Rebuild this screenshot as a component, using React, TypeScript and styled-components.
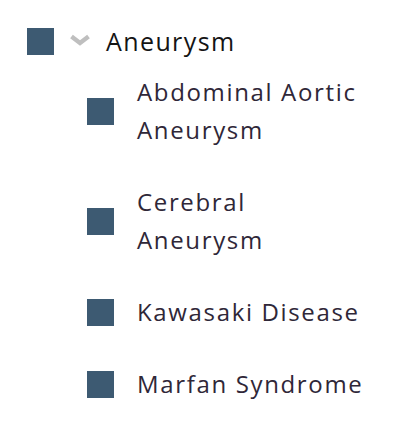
import * as React from "react";
import styled, { createGlobalStyle } from "styled-components";

const GlobalStyle = createGlobalStyle`
  html, body {
    margin: 0;
    padding: 0;
    background: #ffffff;
  }
  body {
    font-family: "Open Sans", "Liberation Sans", sans-serif;
  }
`;

const STree = styled.div`
  padding: 22px 0 0 27px;
  display: flex;
  flex-direction: column;
`;

const SRow = styled.div`
  display: flex;
  align-items: center;
  height: 38px;
`;

const SBox = styled.div`
  width: 27px;
  height: 27px;
  flex: 0 0 27px;
  background: #3d5a72;
`;

const SChevron = styled.svg`
  width: 22px;
  height: 12px;
  margin-left: 15px;
  margin-top: -2px;
  flex: 0 0 22px;
`;

const SParentLabel = styled.div`
  margin-left: 15px;
  font-size: 25px;
  line-height: 38px;
  letter-spacing: 1.4px;
  color: #141414;
`;

const SChildren = styled.div`
  display: flex;
  flex-direction: column;
  gap: 34px;
  padding: 13px 0 0 60px;
`;

const SChild = styled.div`
  display: flex;
  align-items: center;
`;

const SChildLabel = styled.div`
  margin-left: 23px;
  width: 234px;
  font-size: 24px;
  line-height: 38px;
  letter-spacing: 1.65px;
  color: #2f2738;
`;

const items = [
  "Abdominal Aortic Aneurysm",
  "Cerebral Aneurysm",
  "Kawasaki Disease",
  "Marfan Syndrome"
];

export default function App() {
  return (
    <>
      <GlobalStyle />
      <STree>
        <SRow>
          <SBox />
          <SChevron viewBox="0 0 22 12">
            <path
              d="M2.5 2.5 L11 9 L19.5 2.5"
              fill="none"
              stroke="#bfbfbf"
              strokeWidth="4.4"
            />
          </SChevron>
          <SParentLabel>Aneurysm</SParentLabel>
        </SRow>
        <SChildren>
          {items.map(name => (
            <SChild key={name}>
              <SBox />
              <SChildLabel>{name}</SChildLabel>
            </SChild>
          ))}
        </SChildren>
      </STree>
    </>
  );
}
